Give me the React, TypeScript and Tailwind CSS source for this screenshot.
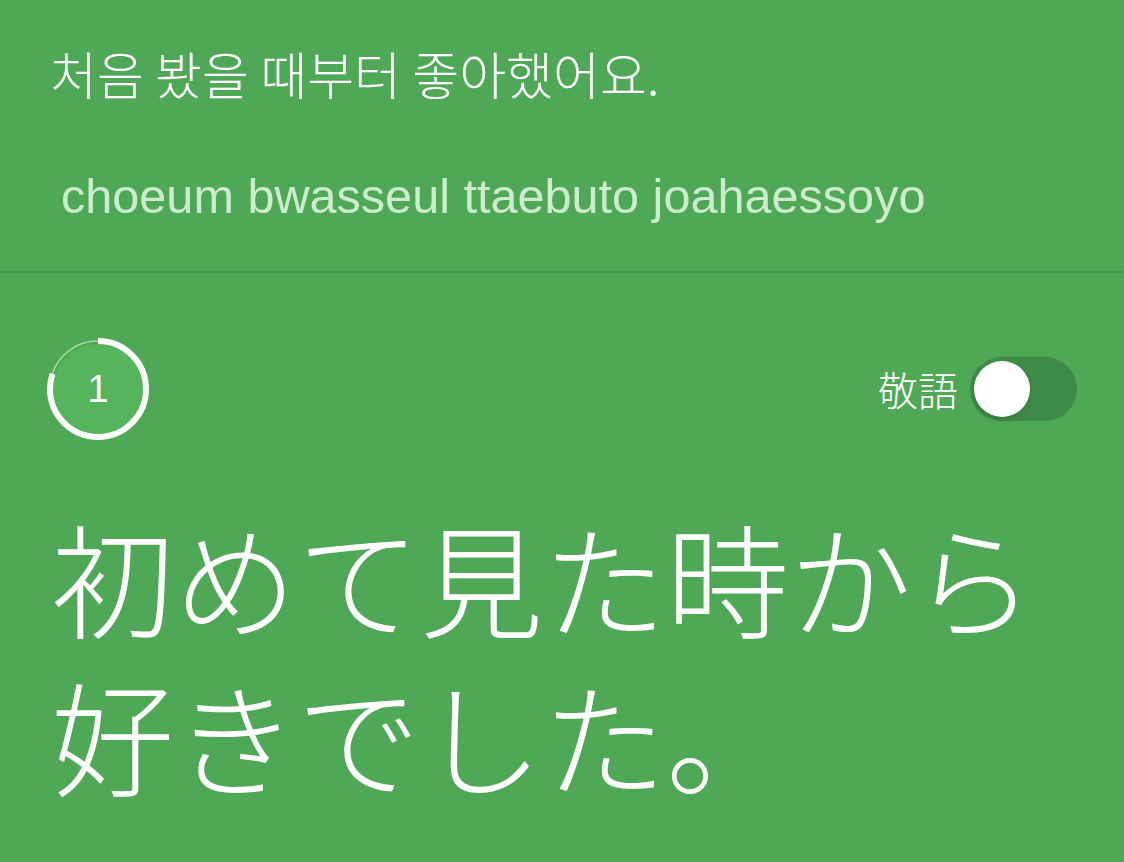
import React, { useState } from 'react';

function ProgressRing({ value }: { value: number }) {
  // ring drawn clockwise from 12 o'clock, leaving a gap up to the top
  const r = 48;
  const c = 2 * Math.PI * r;
  const shown = 0.8 * c;
  return (
    <div className="relative w-[106px] h-[106px]">
      <svg width="106" height="106" viewBox="0 0 106 106" className="absolute inset-0">
        <circle cx="53" cy="53" r="45" fill="#55b45c" />
        <circle cx="53" cy="53" r={r} fill="none" stroke="#a8dcab" strokeWidth="1.5" />
        <circle
          cx="53"
          cy="53"
          r={r}
          fill="none"
          stroke="#ffffff"
          strokeWidth="6"
          strokeDasharray={`${shown} ${c}`}
          transform="rotate(-90 53 53)"
        />
      </svg>
      <div className="absolute inset-0 flex items-center justify-center text-white text-[38px] font-['Liberation_Sans',sans-serif] font-light">
        {value}
      </div>
    </div>
  );
}

export default function App() {
  const [honorific, setHonorific] = useState(false);

  return (
    <div className="w-[1124px] h-[862px] bg-[#4ea855] overflow-hidden font-['Liberation_Sans','Noto_Sans_CJK_KR',sans-serif]">
      <div className="h-[273px] pl-[50px] pt-[41px] border-b-2 border-[#43964a]">
        <div className="text-white text-[51px] leading-[64px] font-['Noto_Sans_CJK_KR',sans-serif] font-light">
          처음 봤을 때부터 좋아했어요.
        </div>
        <div className="mt-[63px] pl-[11px] text-[#cdeccd] text-[48.6px] leading-[56px] font-['Liberation_Sans',sans-serif]">
          choeum bwasseul ttaebuto joahaessoyo
        </div>
      </div>

      <div className="px-[45px] pt-[63px]">
        <div className="flex items-center justify-between">
          <ProgressRing value={1} />
          <div className="flex items-center gap-[12px] pr-[2px]">
            <span className="text-white text-[40px] font-['Noto_Sans_CJK_JP',sans-serif] font-light">敬語</span>
            <button
              onClick={() => setHonorific(!honorific)}
              className={`relative w-[107px] h-[64px] rounded-full flex items-center px-[4px] ${honorific ? 'bg-white/40 justify-end' : 'bg-[#3e8a47] justify-start'}`}
            >
              <span className="w-[56px] h-[56px] rounded-full bg-white shadow-md" />
            </button>
          </div>
        </div>

        <div className="mt-[54px] pl-[6px] text-white text-[123px] leading-[158px] font-['Noto_Sans_CJK_JP',sans-serif] font-light">
          初めて見た時から好きでした。
        </div>
      </div>
    </div>
  );
}
